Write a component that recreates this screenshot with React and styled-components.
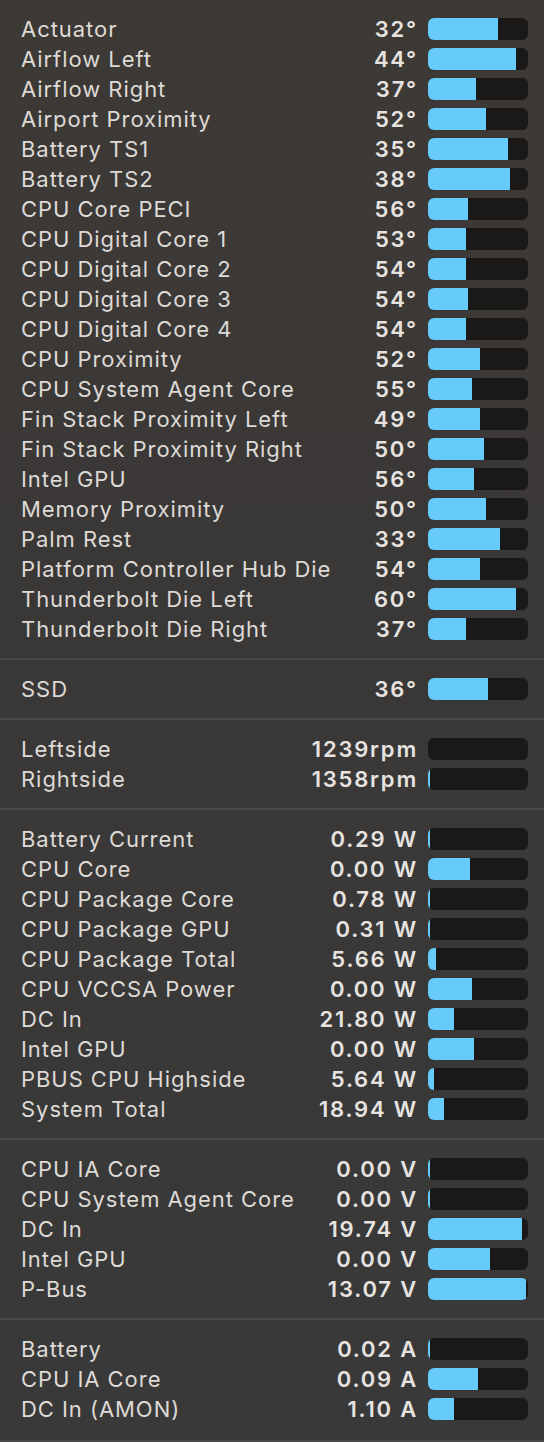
import React from "react";
import styled, { createGlobalStyle } from "styled-components";

const GlobalStyle = createGlobalStyle`
  * {
    margin: 0;
    padding: 0;
    box-sizing: border-box;
  }
  body {
    background: #3a3836;
    font-family: Inter, "Noto Sans", sans-serif;
  }
`;

const sections = [
  [
    ["Actuator", "32°", 70],
    ["Airflow Left", "44°", 88],
    ["Airflow Right", "37°", 48],
    ["Airport Proximity", "52°", 58],
    ["Battery TS1", "35°", 80],
    ["Battery TS2", "38°", 82],
    ["CPU Core PECI", "56°", 40],
    ["CPU Digital Core 1", "53°", 38],
    ["CPU Digital Core 2", "54°", 38],
    ["CPU Digital Core 3", "54°", 40],
    ["CPU Digital Core 4", "54°", 38],
    ["CPU Proximity", "52°", 52],
    ["CPU System Agent Core", "55°", 44],
    ["Fin Stack Proximity Left", "49°", 52],
    ["Fin Stack Proximity Right", "50°", 56],
    ["Intel GPU", "56°", 46],
    ["Memory Proximity", "50°", 58],
    ["Palm Rest", "33°", 72],
    ["Platform Controller Hub Die", "54°", 52],
    ["Thunderbolt Die Left", "60°", 88],
    ["Thunderbolt Die Right", "37°", 38],
  ],
  [["SSD", "36°", 60]],
  [
    ["Leftside", "1239rpm", 0],
    ["Rightside", "1358rpm", 2],
  ],
  [
    ["Battery Current", "0.29 W", 2],
    ["CPU Core", "0.00 W", 42],
    ["CPU Package Core", "0.78 W", 2],
    ["CPU Package GPU", "0.31 W", 2],
    ["CPU Package Total", "5.66 W", 8],
    ["CPU VCCSA Power", "0.00 W", 44],
    ["DC In", "21.80 W", 26],
    ["Intel GPU", "0.00 W", 46],
    ["PBUS CPU Highside", "5.64 W", 6],
    ["System Total", "18.94 W", 16],
  ],
  [
    ["CPU IA Core", "0.00 V", 2],
    ["CPU System Agent Core", "0.00 V", 2],
    ["DC In", "19.74 V", 94],
    ["Intel GPU", "0.00 V", 62],
    ["P-Bus", "13.07 V", 98],
  ],
  [
    ["Battery", "0.02 A", 2],
    ["CPU IA Core", "0.09 A", 50],
    ["DC In (AMON)", "1.10 A", 26],
  ],
];

const Panel = styled.div`
  width: 544px;
  min-height: 1442px;
  background: linear-gradient(180deg, #3d3935 0%, #3a3837 40%, #393939 100%);
  display: flex;
  flex-direction: column;
  border-bottom: 2px solid #4a4a4a;
`;

const Section = styled.div`
  display: flex;
  flex-direction: column;
  padding: 14px 16px 14px 21px;
  & + & {
    border-top: 2px solid #4a4948;
  }
`;

const Row = styled.div`
  display: flex;
  align-items: center;
  height: 30px;
`;

const Label = styled.span`
  flex: 1;
  font-size: 22px;
  letter-spacing: 0.95px;
  color: #dedad6;
  white-space: nowrap;
`;

const Value = styled.span`
  font-size: 22px;
  font-weight: 600;
  letter-spacing: 1.8px;
  color: #e6e3e0;
  text-align: right;
  white-space: nowrap;
  margin-right: 10px;
`;

const Bar = styled.div`
  width: 100px;
  height: 22px;
  border-radius: 6px;
  background: #1a1918;
  overflow: hidden;
  flex-shrink: 0;
`;

const Fill = styled.div`
  height: 100%;
  background: #66cbfa;
`;

export default function App() {
  return (
    <>
      <GlobalStyle />
      <Panel>
        {sections.map((rows, i) => (
          <Section key={i}>
            {rows.map(([label, value, fill]) => (
              <Row key={label + value}>
                <Label>{label}</Label>
                <Value>{value}</Value>
                <Bar>
                  <Fill style={{ width: fill }} />
                </Bar>
              </Row>
            ))}
          </Section>
        ))}
      </Panel>
    </>
  );
}
